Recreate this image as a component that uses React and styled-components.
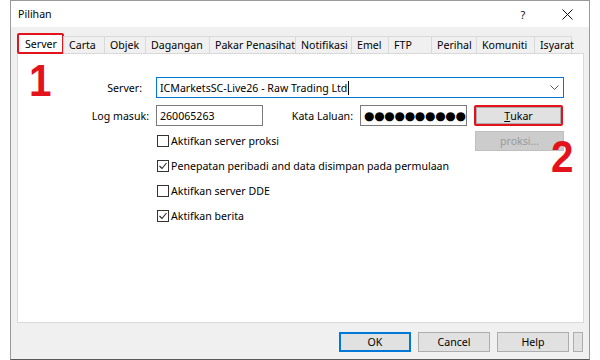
import React from "react";
import styled, { createGlobalStyle } from "styled-components";

const GlobalStyle = createGlobalStyle`
  html, body { margin: 0; padding: 0; background: #ffffff; }
  body { font-family: "Noto Sans", "Liberation Sans", sans-serif; font-size: 10.5px; color: #000; }
  * { box-sizing: border-box; }
`;

const RED = "#e4121b";
const FS = "10.6px";

const Stage = styled.div`
  position: relative;
  width: 600px;
  height: 360px;
  padding-left: 10px;
  overflow: hidden;
  background: #fff;
`;

const Window = styled.div`
  width: 580px;
  height: 360px;
  border: 1px solid #9a9a9a;
  border-bottom: 1px solid #5a5a5a;
  background: #f0f0f0;
  display: flex;
  flex-direction: column;
`;

const TitleBar = styled.div`
  height: 26px;
  flex: none;
  background: #ffffff;
  display: flex;
  align-items: center;
  padding-left: 7px;
`;

const Title = styled.div`
  font-size: ${FS};
  color: #000;
  flex: 1;
`;

const TitleButton = styled.div`
  width: 44px;
  height: 26px;
  display: flex;
  align-items: center;
  justify-content: center;
  font-size: 11px;
  color: #111;
`;

const Body = styled.div`
  padding: 6px 5px 0 6px;
  display: flex;
  flex-direction: column;
`;

const TabStrip = styled.div`
  display: flex;
  align-items: flex-end;
  height: 20px;
  position: relative;
  z-index: 1;
`;

const Tab = styled.div`
  width: ${(p) => p.$w}px;
  height: ${(p) => (p.$active ? 21 : 17)}px;
  margin-bottom: ${(p) => (p.$active ? -1 : 0)}px;
  background: ${(p) => (p.$active ? "#ffffff" : "#f0f0f0")};
  border: 1px solid #d9d9d9;
  border-bottom: none;
  ${(p) =>
    p.$highlight
      ? `border: 2px solid ${RED}; border-radius: 2px; padding-left: 6px;`
      : "padding-left: 5px;"}
  margin-right: -1px;
  display: flex;
  align-items: center;
  font-size: ${FS};
  color: #000;
  white-space: nowrap;
`;

const Panel = styled.div`
  height: 270px;
  background: #ffffff;
  border: 1px solid #d9d9d9;
  display: flex;
  flex-direction: column;
  gap: 5px;
  padding: 23px 19px 0 0;
`;

const Row = styled.div`
  display: flex;
  align-items: center;
  height: ${(p) => p.$h || 20}px;
  margin-bottom: ${(p) => p.$mb || 0}px;
`;

const Label = styled.div`
  width: ${(p) => p.$w}px;
  padding-right: ${(p) => p.$pr || 0}px;
  text-align: right;
  font-size: ${FS};
  color: #000;
  white-space: nowrap;
  flex: none;
`;

const Gap = styled.div`
  width: ${(p) => p.$w}px;
  flex: none;
`;

const Combo = styled.div`
  width: 409px;
  height: 21px;
  border: 1px solid #0078d7;
  background: #fff;
  display: flex;
  align-items: center;
  padding: 0 4px 0 3px;
  font-size: ${FS};
`;

const ComboText = styled.div`
  flex: 1;
  display: flex;
  align-items: center;
`;

const Caret = styled.span`
  display: inline-block;
  width: 1px;
  height: 14px;
  background: #000;
  margin-left: 1px;
`;

const TextInput = styled.div`
  width: ${(p) => p.$w}px;
  height: 21px;
  border: 1px solid #7a7a7a;
  background: #fff;
  display: flex;
  align-items: center;
  padding-left: 3px;
  font-size: ${FS};
  overflow: hidden;
  white-space: nowrap;
  flex: none;
`;

const Bullets = styled.span`
  font-family: "DejaVu Sans", sans-serif;
  font-size: 12px;
  letter-spacing: -0.3px;
  color: #000;
  white-space: nowrap;
`;

const RedFrame = styled.div`
  width: 89px;
  height: 21px;
  border: 2px solid ${RED};
  border-radius: 2px;
  flex: none;
  display: flex;
`;

const Button = styled.div`
  width: ${(p) => p.$w || 72}px;
  height: ${(p) => p.$h || 20}px;
  flex: none;
  background: ${(p) => (p.$disabled ? "#cccccc" : "#e1e1e1")};
  border: ${(p) => (p.$default ? "2px solid #0078d7" : p.$disabled ? "1px solid #bfbfbf" : "1px solid #adadad")};
  color: ${(p) => (p.$disabled ? "#9a9a9a" : "#000")};
  display: flex;
  align-items: center;
  justify-content: center;
  font-size: ${FS};
  margin-left: ${(p) => p.$ml || 0}px;
`;

const FrameButton = styled(Button)`
  flex: 1;
  height: auto;
  width: auto;
`;

const Underline = styled.span`
  text-decoration: underline;
`;

const Spacer = styled.div`
  flex: 1;
`;

const CheckRow = styled.label`
  display: flex;
  align-items: center;
  gap: 2px;
  margin-left: 139px;
  font-size: ${FS};
  color: #000;
  white-space: nowrap;
`;

const Box = styled.span`
  width: 12px;
  height: 12px;
  border: 1px solid #333;
  background: #fff;
  display: inline-flex;
  align-items: center;
  justify-content: center;
  flex: none;
`;

const Footer = styled.div`
  display: flex;
  justify-content: flex-end;
  gap: 7px;
  padding: 9px 6px 0 0;
`;

const Digit = styled.div`
  position: absolute;
  left: ${(p) => p.$x}px;
  top: ${(p) => p.$y}px;
  font-family: "Liberation Sans", Arial, sans-serif;
  font-weight: 700;
  font-size: 44px;
  line-height: 1;
  color: ${RED};
  transform: scaleX(0.92);
`;

const tabs = [
  ["Server", 47],
  ["Carta", 42],
  ["Objek", 42],
  ["Dagangan", 65],
  ["Pakar Penasihat", 87],
  ["Notifikasi", 57],
  ["Emel", 38],
  ["FTP", 44],
  ["Perihal", 46],
  ["Komuniti", 59],
  ["Isyarat", 38],
];

function Check({ checked, children }) {
  return (
    <CheckRow>
      <Box>
        {checked && (
          <svg width="10" height="10" viewBox="0 0 10 10">
            <polyline points="1.5,5 4,7.5 8.5,2" fill="none" stroke="#222" strokeWidth="1.1" />
          </svg>
        )}
      </Box>
      {children}
    </CheckRow>
  );
}

export default function App() {
  return (
    <>
      <GlobalStyle />
      <Stage>
        <Window>
          <TitleBar>
            <Title>Pilihan</Title>
            <TitleButton>?</TitleButton>
            <TitleButton>
              <svg width="11" height="11" viewBox="0 0 11 11">
                <path d="M0.5 0.5 L10.5 10.5 M10.5 0.5 L0.5 10.5" stroke="#111" strokeWidth="1" />
              </svg>
            </TitleButton>
          </TitleBar>
          <Body>
            <TabStrip>
              {tabs.map(([name, w], i) => (
                <Tab key={name} $w={w} $active={i === 0} $highlight={i === 0}>
                  {name}
                </Tab>
              ))}
            </TabStrip>
            <Panel>
              <Row $h={21} $mb={2}>
                <Label $w={131} $pr={7}>Server:</Label>
                <Gap $w={7} />
                <Combo>
                  <ComboText>
                    ICMarketsSC-Live26 - Raw Trading Ltd
                    <Caret />
                  </ComboText>
                  <svg width="9" height="6" viewBox="0 0 9 6">
                    <polyline points="0.5,0.5 4.5,4.5 8.5,0.5" fill="none" stroke="#555" strokeWidth="1" />
                  </svg>
                </Combo>
              </Row>
              <Row $h={21}>
                <Label $w={131}>Log masuk:</Label>
                <Gap $w={7} />
                <TextInput $w={107}>260065263</TextInput>
                <Label $w={90}>Kata Laluan:</Label>
                <Gap $w={7} />
                <TextInput $w={107}>
                  <Bullets>●●●●●●●●●●●●</Bullets>
                </TextInput>
                <Gap $w={7} />
                <RedFrame>
                  <FrameButton>
                    <Underline>T</Underline>ukar
                  </FrameButton>
                </RedFrame>
              </Row>
              <Row>
                <Check>Aktifkan server proksi</Check>
                <Spacer />
                <Button $w={89} $disabled>proksi...</Button>
              </Row>
              <Row>
                <Check checked>Penepatan peribadi and data disimpan pada permulaan</Check>
              </Row>
              <Row>
                <Check>Aktifkan server DDE</Check>
              </Row>
              <Row>
                <Check checked>Aktifkan berita</Check>
              </Row>
            </Panel>
          </Body>
          <Footer>
            <Button $default>OK</Button>
            <Button>Cancel</Button>
            <Button>Help</Button>
            <Button $w={10} $ml={-3} />
          </Footer>
        </Window>
        <Digit $x={28} $y={59}>1</Digit>
        <Digit $x={550} $y={135}>2</Digit>
      </Stage>
    </>
  );
}
